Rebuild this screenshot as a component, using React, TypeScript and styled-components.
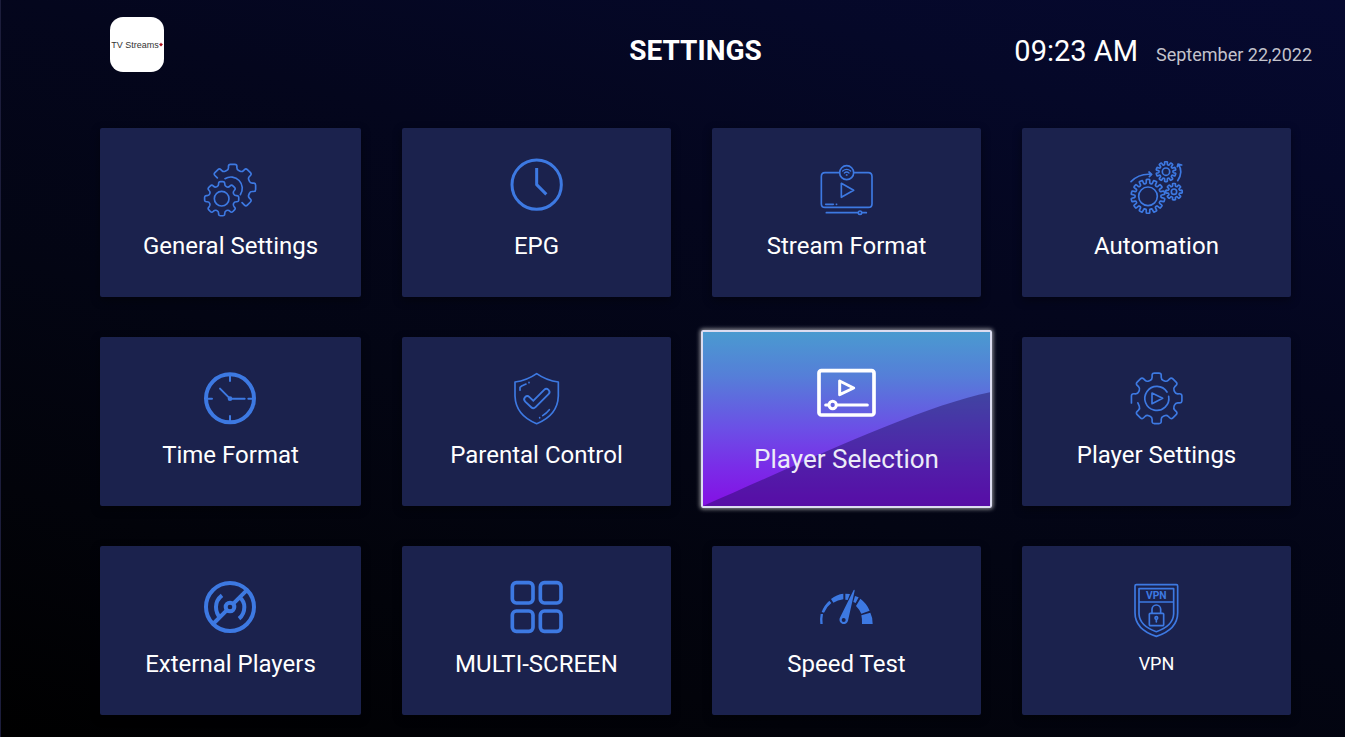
import React from "react";
import styled, { createGlobalStyle, css } from "styled-components";

const BLUE = "#3d79e2";
const CARD = "#1b224d";

const GlobalStyle = createGlobalStyle`
  *, *::before, *::after { box-sizing: border-box; }
  body {
    margin: 0;
    background: #010208;
    color: #fff;
    font-family: Roboto, "Liberation Sans", sans-serif;
  }
`;

const Page = styled.div`
  min-height: 100vh;
  border-left: 1px solid #1c1d3b;
  padding: 0 54px 22px 99px;
  background: linear-gradient(197deg, #060930 0%, #050828 16%, #04061d 35%, #030513 58%, #02030a 78%, #000 100%);
`;

const Header = styled.header`
  display: grid;
  grid-template-columns: 1fr auto 1fr;
  align-items: start;
  height: 128px;
  padding-top: 17px;
`;

const Logo = styled.a`
  display: flex;
  align-items: center;
  justify-content: center;
  width: 54px;
  height: 55px;
  margin-left: 10px;
  border-radius: 13px;
  background: #fff;
  color: #333;
  font: 9px/12px "Liberation Sans", Arial, sans-serif;
  text-decoration: none;
  white-space: nowrap;
`;

const Title = styled.h1`
  margin: 16px 0 0;
  font-size: 28px;
  line-height: 36px;
  font-weight: 700;
`;

const Clock = styled.div`
  display: flex;
  align-items: baseline;
  justify-content: flex-end;
  gap: 18px;
  margin: 16px -21px 0 0;
  white-space: nowrap;
`;

const Time = styled.time`
  font-size: 29px;
  line-height: 36px;
`;

const DateText = styled.time`
  color: #c3c3cc;
  font-size: 18px;
  line-height: 24px;
`;

const Grid = styled.main`
  display: grid;
  grid-template-columns: 261fr 269fr 269fr 269fr;
  grid-auto-rows: 169px;
  gap: 40px 41px;
`;

const Card = styled.button<{ $active?: boolean }>`
  position: relative;
  display: flex;
  flex-direction: column;
  align-items: center;
  padding: 27px 0 0;
  border: 0;
  border-radius: 2px;
  background: ${CARD};
  color: #fff;
  font-family: inherit;
  cursor: pointer;
  box-shadow: 0 3px 10px rgba(0, 0, 0, 0.4);
  ${(p) =>
    p.$active &&
    css`
      margin: -7px -11px -2px;
      padding-top: 26px;
      border: 2px solid #dcdcf0;
      background: linear-gradient(#4a9ad0 0%, #557fd8 25%, #6b50e6 55%, #7a2ce8 78%, #8410e4 100%);
      box-shadow: 0 0 4px 1px rgba(255, 255, 255, 0.6);
    `}
`;

const Wave = styled.svg`
  position: absolute;
  inset: 0;
  width: 100%;
  height: 100%;
`;

const Icon = styled.svg`
  position: relative;
  display: block;
  width: 61px;
  height: 62px;
  overflow: visible;
  fill: none;
  stroke: ${BLUE};
  stroke-width: 5;
  stroke-linejoin: round;
  stroke-linecap: round;
`;

const Stroke = styled.g<{ $w: number; $butt?: boolean; $color?: string }>`
  stroke: ${(p) => p.$color ?? BLUE};
  stroke-width: ${(p) => p.$w};
  stroke-linecap: ${(p) => (p.$butt ? "butt" : "round")};
`;

const Solid = styled.g`
  fill: ${BLUE};
  stroke: none;
`;

const Badge = styled.text`
  fill: ${BLUE};
  stroke: none;
  font: 700 31px Roboto, sans-serif;
  text-anchor: middle;
`;

const Label = styled.span<{ $size?: "small" | "large" }>`
  position: relative;
  margin-top: ${(p) => (p.$size === "large" ? 24 : 14)}px;
  font-size: ${(p) => (p.$size === "large" ? 26 : p.$size === "small" ? 18 : 24)}px;
  line-height: 30px;
  color: ${(p) => (p.$size === "large" ? "#ececf8" : "#fff")};
`;

type Point = [number, number];

/** Corner points of a cog, clockwise; tooth 0 points up. */
function cog(cx: number, cy: number, tip: number, root: number, teeth: number, from = 0, count = teeth) {
  const step = 360 / teeth;
  const pts: Point[] = [];
  const at = (deg: number, r: number) => {
    const a = ((deg - 90) * Math.PI) / 180;
    pts.push([cx + r * Math.cos(a), cy + r * Math.sin(a)]);
  };
  for (let i = from; i < from + count; i++) {
    const c = i * step;
    at(c - step * 0.3, root);
    at(c - step * 0.23, tip);
    at(c + step * 0.23, tip);
    at(c + step * 0.3, root);
  }
  return pts;
}

/** Path through the points with each corner rounded off by `r`. */
function rounded(pts: Point[], r: number, close = true) {
  const n = pts.length;
  const xy = (p: Point) => `${p[0].toFixed(1)} ${p[1].toFixed(1)}`;
  const toward = (a: Point, b: Point): Point => {
    const d = Math.hypot(b[0] - a[0], b[1] - a[1]);
    const k = Math.min(r, d / 2) / d;
    return [a[0] + (b[0] - a[0]) * k, a[1] + (b[1] - a[1]) * k];
  };
  let d = close ? "" : `M${xy(pts[0])}`;
  for (let i = close ? 0 : 1; i < (close ? n : n - 1); i++) {
    const prev = pts[(i - 1 + n) % n];
    const next = pts[(i + 1) % n];
    d += `${d ? "L" : "M"}${xy(toward(pts[i], prev))}Q${xy(pts[i])} ${xy(toward(pts[i], next))}`;
  }
  return close ? d + "Z" : d + `L${xy(pts[n - 1])}`;
}

const playerCog = cog(125, 115, 77, 58, 8, 6);

const icons: Record<string, React.ReactNode> = {
  general: (
    <Icon viewBox="30 15 183 186" aria-hidden>
      <path d={rounded(cog(95, 146, 52, 39, 8), 6)} />
      <circle cx="95" cy="146" r="22" />
      <path d={rounded(cog(128, 112, 70, 54, 8, -1, 5), 6, false)} />
      <path d="M105 86A34 34 0 0 1 151 134" />
    </Icon>
  ),
  epg: (
    <Icon viewBox="33 15 183 186" aria-hidden>
      <Stroke $w={9} $butt>
        <circle cx="125" cy="104" r="74" />
        <path d="M125 54V104L154 133" />
      </Stroke>
    </Icon>
  ),
  stream: (
    <Icon viewBox="33 15 183 186" aria-hidden>
      <path d="M103 68H60Q49 68 49 80V161Q49 172 60 172H190Q201 172 201 161V80Q201 68 190 68H147" />
      <circle cx="125" cy="68" r="21" />
      <path d="M109 100V142L146 121ZM62 163H85M94 163H95M64 188H158M171 188H184" />
      <circle cx="165" cy="188" r="5" />
      <Stroke $w={4}>
        <path d="M113 63Q125 53 137 63M118 69Q125 63 132 69" />
        <circle cx="125" cy="75" r="1" />
      </Stroke>
    </Icon>
  ),
  automation: (
    <Icon viewBox="33 15 183 186" aria-hidden>
      <path d={rounded(cog(99, 139, 51, 39, 14), 2)} />
      <circle cx="99" cy="139" r="28" />
      <path d={rounded(cog(153, 65, 30, 21, 10), 2)} />
      <circle cx="153" cy="65" r="11" />
      <path d={rounded(cog(177, 125, 25, 17, 8), 2)} />
      <circle cx="177" cy="125" r="8" />
      <path d="M48 95Q72 70 108 73M102 66L110 73L103 80M188 92Q206 66 190 43M187 50L189 42L200 45" />
    </Icon>
  ),
  time: (
    <Icon viewBox="30 12 183 186" aria-hidden>
      <Stroke $w={12}>
        <circle cx="120" cy="115" r="72" />
      </Stroke>
      <Stroke $w={6}>
        <path d="M120 48V63M120 168V184M52 116H66M175 116H188M90 86L120 116H164" />
      </Stroke>
      <Solid>
        <circle cx="120" cy="116" r="7" />
      </Solid>
    </Icon>
  ),
  parental: (
    <Icon viewBox="33 12 183 186" aria-hidden>
      <path d="M125 41Q95 62 60 66V108Q62 166 125 191Q188 166 190 108V66Q155 62 125 41Z" />
      <path d="M75 91V82L80 78L93 72M102 67V68M143 167Q154 160 163 149M134 173V174" />
      <Stroke $w={24}>
        <path d="M97 118L115 135L154 96" />
      </Stroke>
      <Stroke $w={13} $color={CARD}>
        <path d="M97 118L115 135L154 96" />
      </Stroke>
    </Icon>
  ),
  selection: (
    <Icon viewBox="378 114 183 186" aria-hidden>
      <Stroke $w={11} $color="#fff">
        <rect x="387" y="152" width="165" height="133" rx="7" />
      </Stroke>
      <Stroke $w={9} $color="#fff">
        <path d="M449 183V224L491 204ZM407 255H416M441 255H532" />
        <circle cx="428" cy="255" r="11" />
      </Stroke>
    </Icon>
  ),
  player: (
    <Icon viewBox="33 12 183 186" aria-hidden>
      <path d={rounded([...playerCog.slice(1), playerCog[0]], 7, false)} />
      <path d="M156 96A36 36 0 1 0 161 109M111 99V131L143 115Z" />
    </Icon>
  ),
  external: (
    <Icon viewBox="30 9 183 186" aria-hidden>
      <Stroke $w={12} $butt>
        <circle cx="120" cy="111" r="72" />
        <path d="M170 61L130 101M110 121L72 159M96 76Q78 90 78 111Q78 130 91 144M149 82Q163 94 163 111Q163 133 147 146" />
        <circle cx="120" cy="111" r="13" />
      </Stroke>
    </Icon>
  ),
  multi: (
    <Icon viewBox="948 9 183 186" aria-hidden>
      <Stroke $w={11}>
        <rect x="967" y="38" width="62" height="61" rx="12" />
        <rect x="1051" y="38" width="62" height="61" rx="12" />
        <rect x="967" y="123" width="62" height="61" rx="12" />
        <rect x="1051" y="123" width="62" height="61" rx="12" />
      </Stroke>
    </Icon>
  ),
  speed: (
    <Icon viewBox="33 9 183 186" aria-hidden>
      <Solid>
        <path d="M47 132H54Q51 147 53 162H46Q44 147 47 132ZM50 126Q57 106 73 92L79 99Q64 111 57 128ZM78 87Q95 73 115 71V88Q98 90 85 98ZM121 71L135 72L128 90L121 89ZM150 78L161 82L152 99L145 96ZM166 86Q186 101 194 122L169 131Q163 118 153 108ZM196 128Q204 144 203 162H171Q172 148 169 136Z" />
        <path
          fillRule="evenodd"
          d="M146 60Q149 57 149 62L129 152A13 13 0 1 1 104 145ZM116 144A6 6 0 1 0 116 156A6 6 0 1 0 116 144Z"
        />
      </Solid>
    </Icon>
  ),
  vpn: (
    <Icon viewBox="963 9 183 186" aria-hidden>
      <path d="M994 44H1114Q1118 44 1118 48V128Q1118 178 1054 199Q990 178 990 128V48Q990 44 994 44Z" />
      <path d="M1002 56H1106V132Q1104 168 1054 185Q1004 168 1002 132ZM1002 96H1106" />
      <rect x="1033" y="130" width="43" height="37" rx="3" />
      <path d="M1041 129V118A13 13 0 0 1 1067 118V129M1054 149V156" />
      <circle cx="1054" cy="144" r="4" />
      <Badge x="1054" y="87">
        VPN
      </Badge>
    </Icon>
  ),
};

const items: { icon: string; label: string; small?: boolean; active?: boolean }[] = [
  { icon: "general", label: "General Settings" },
  { icon: "epg", label: "EPG" },
  { icon: "stream", label: "Stream Format" },
  { icon: "automation", label: "Automation" },
  { icon: "time", label: "Time Format" },
  { icon: "parental", label: "Parental Control" },
  { icon: "selection", label: "Player Selection", active: true },
  { icon: "player", label: "Player Settings" },
  { icon: "external", label: "External Players" },
  { icon: "multi", label: "MULTI-SCREEN" },
  { icon: "speed", label: "Speed Test" },
  { icon: "vpn", label: "VPN", small: true },
];

export default function App() {
  return (
    <Page>
      <GlobalStyle />
      <Header>
        <Logo href="#">
          TV Streams
          <svg width="4" height="5" viewBox="0 0 10 10" aria-hidden>
            <path fill="#a8101c" d="M5 0L7 3L10 4L8 7L5 10L2 7L0 4L3 3Z" />
          </svg>
        </Logo>
        <Title>SETTINGS</Title>
        <Clock>
          <Time>09:23 AM</Time>
          <DateText dateTime="2022-09-22">September 22,2022</DateText>
        </Clock>
      </Header>
      <Grid>
        {items.map((it) => (
          <Card key={it.icon} type="button" $active={it.active}>
            {it.active && (
              <Wave viewBox="0 0 288 173" preserveAspectRatio="none" aria-hidden>
                <path d="M0 173C100 130 215 75 288 60V173Z" fill="#1a0a50" fillOpacity="0.42" />
              </Wave>
            )}
            {icons[it.icon]}
            <Label $size={it.active ? "large" : it.small ? "small" : undefined}>{it.label}</Label>
          </Card>
        ))}
      </Grid>
    </Page>
  );
}
